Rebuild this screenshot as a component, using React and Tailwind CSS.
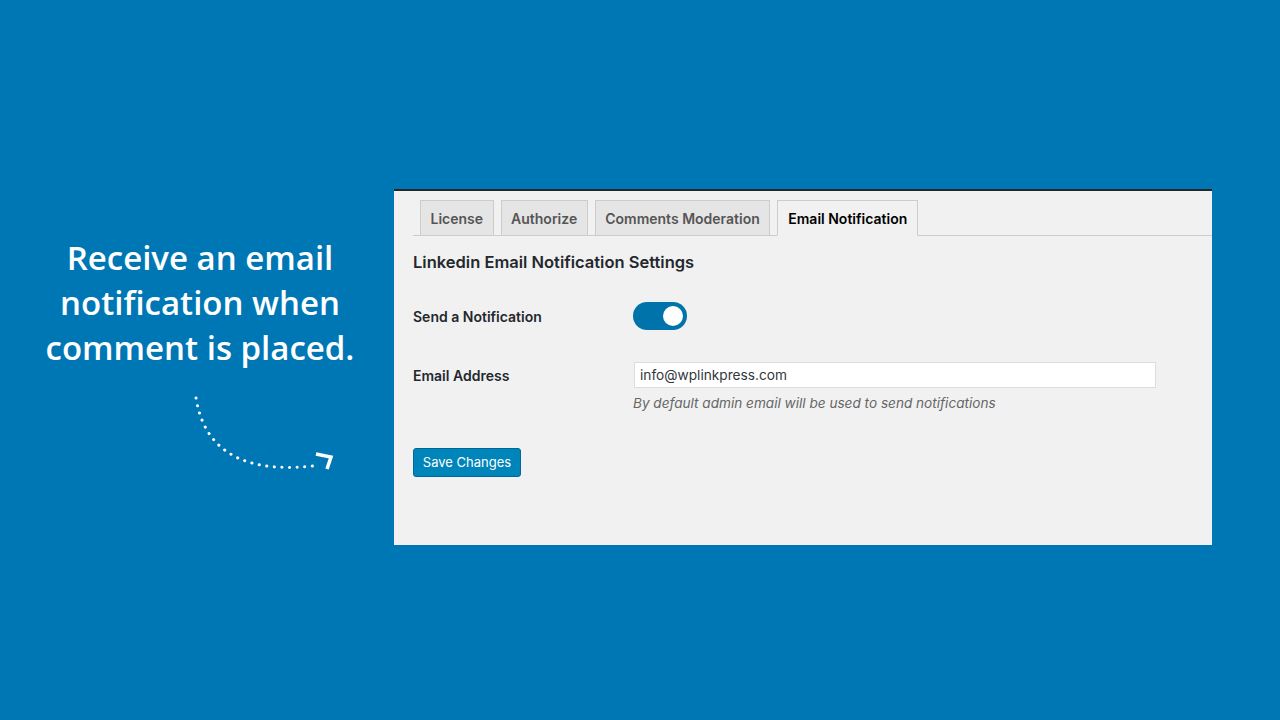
import React from "react";

const sans = { fontFamily: "Inter, 'Noto Sans', sans-serif" };

function Tab({ children, active }) {
  return active ? (
    <div className="h-[36px] -mb-px px-[10px] flex items-center border border-[#cccccc] border-b-[#f1f1f1] bg-[#f1f1f1] text-[14px] font-semibold text-black">
      {children}
    </div>
  ) : (
    <div className="h-[35px] px-[9.5px] flex items-center border border-[#cccccc] border-b-0 bg-[#e5e5e5] text-[14px] font-semibold text-[#555555]">
      {children}
    </div>
  );
}

function Arrow() {
  return (
    <svg width="160" height="100" viewBox="0 0 160 100" className="block">
      <path
        d="M16 18 C 24 68, 60 94, 133 86"
        fill="none"
        stroke="white"
        strokeWidth="3"
        strokeLinecap="round"
        strokeDasharray="0.1 7.5"
      />
      <path
        d="M136 74 L 151 77 L 147 89"
        fill="none"
        stroke="white"
        strokeWidth="3.5"
        strokeLinecap="butt"
        strokeLinejoin="miter"
      />
    </svg>
  );
}

export default function App() {
  return (
    <div className="w-[1280px] h-[720px] bg-[#0077b5] flex items-start pt-[189px] overflow-hidden" style={sans}>
      <div className="w-[394px] shrink-0 flex flex-col">
        <div
          className="pt-[46px] w-[400px] text-center text-white text-[33px] leading-[45px] font-semibold"
          style={{ fontFamily: "'Open Sans', 'Noto Sans', sans-serif" }}
        >
          Receive an email
          <br />
          notification when
          <br />
          comment is placed.
        </div>
        <div className="pl-[180px] pt-[10px]">
          <Arrow />
        </div>
      </div>
      <div className="w-[818px] h-[356px] bg-[#f1f1f1] border-t-2 border-[#23282d] flex flex-col">
        <div className="ml-[19px] mt-[9px] pl-[7px] flex items-end gap-[7px] border-b border-[#cccccc]">
          <Tab>License</Tab>
          <Tab>Authorize</Tab>
          <Tab>Comments Moderation</Tab>
          <Tab active>Email Notification</Tab>
        </div>
        <div className="pl-[19px] pr-[56px]">
          <h2 className="mt-[15px] text-[16.5px] leading-[22px] font-semibold text-[#23282d]">
            Linkedin Email Notification Settings
          </h2>
          <div className="mt-[28px] flex items-center h-[30px]">
            <div className="w-[220px] text-[14px] font-semibold text-[#23282d]">Send a Notification</div>
            <div className="w-[54px] h-[28px] rounded-full bg-[#0073aa] flex items-center justify-end pr-[4px]">
              <div className="w-[20px] h-[20px] rounded-full bg-white" />
            </div>
          </div>
          <div className="mt-[31px] flex items-start">
            <div className="w-[220px] pt-[3px] text-[14px] font-semibold text-[#23282d]">Email Address</div>
            <div className="flex-1 flex flex-col">
              <div className="ml-[1px] h-[26px] w-[522px] bg-white border border-[#dddddd] flex items-center px-[5px] text-[13.7px] text-[#32373c]">
                info@wplinkpress.com
              </div>
              <div className="mt-[5px] text-[13.6px] italic text-[#666666] leading-[20px]">
                By default admin email will be used to send notifications
              </div>
            </div>
          </div>
          <button className="mt-[35px] h-[29px] w-[108px] rounded-[3px] bg-[#0085ba] border border-[#006799] text-white text-[13px] flex items-center justify-center">
            Save Changes
          </button>
        </div>
      </div>
    </div>
  );
}
